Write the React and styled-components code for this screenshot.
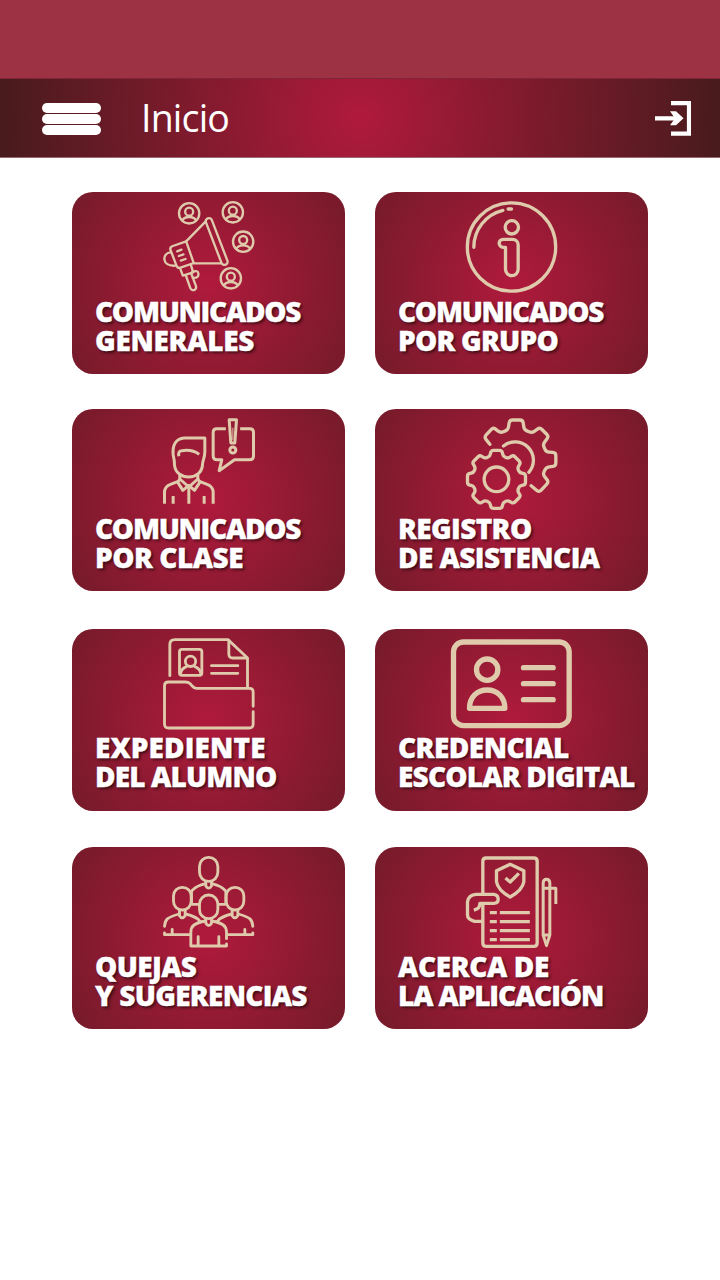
import React from 'react'
import styled, { createGlobalStyle } from 'styled-components'

const GlobalStyle = createGlobalStyle`
  * {
    box-sizing: border-box;
  }

  body {
    margin: 0;
    background: #fff;
    font-family: 'Open Sans', 'Noto Sans', sans-serif;
  }
`

const Screen = styled.div`
  width: 720px;
  min-height: 1280px;
  background: #fff;
`

const StatusBar = styled.div`
  height: 78px;
  background: #9c3243;
`

const Header = styled.header`
  display: flex;
  align-items: center;
  height: 80px;
  padding: 1px 29px 0 42px;
  border-top: 1px solid #822438;
  border-bottom: 1px solid #9a6a70;
  background: radial-gradient(circle 362px at 50% 50%, #b01a3c 0%, #471b1c 100%);
  background-origin: border-box;
`

const MenuButton = styled.button`
  display: flex;
  flex-direction: column;
  gap: 1px;
  width: 59px;
  padding: 0;
  border: 0;
  background: none;
  cursor: pointer;
`

const Bar = styled.span`
  height: 10px;
  border-radius: 5px;
  background: #fff;
`

const Title = styled.h1`
  flex: 1;
  margin: -2px 0 0 40px;
  font-size: 37.5px;
  font-weight: 400;
  line-height: 60px;
  letter-spacing: -0.8px;
  color: #fff;
`

const ExitButton = styled.button`
  display: flex;
  padding: 0;
  border: 0;
  background: none;
  cursor: pointer;
`

const Menu = styled.main`
  display: grid;
  grid-template-columns: 273px 273px;
  grid-template-rows: 217px 220px 218px 182px;
  column-gap: 30px;
  align-items: start;
  padding: 34px 72px 0;
`

const Card = styled.a`
  display: flex;
  flex-direction: column;
  gap: ${({ tight }) => (tight ? 0 : 1)}px;
  height: 182px;
  padding: 6px 0 0 23px;
  border-radius: 21px;
  background: radial-gradient(circle 290px at 50% 50%, #b01a3c 0%, #471b1c 100%);
  text-decoration: none;
  cursor: pointer;
`

const CardIcon = styled.svg`
  width: 124px;
  height: 98px;
  margin-left: 52px;
  fill: none;
  stroke: #dfcaac;
  stroke-width: ${({ weight }) => weight};
  stroke-linecap: ${({ cap }) => cap || 'round'};
  stroke-linejoin: round;
`

const Label = styled.span`
  font-size: 28px;
  font-weight: 800;
  line-height: 28.5px;
  color: #fff;
  white-space: nowrap;
  -webkit-text-stroke: 0.3px #fff;
  text-shadow: 2px 2px 3px rgba(0, 0, 0, 0.55);
`

const Line = styled.span`
  display: block;
  letter-spacing: ${({ spacing }) => spacing || 0}px;
`

// joins points with straight segments and softened corners
function rounded(points, radius, closed) {
  const n = points.length
  const towards = (a, b) => {
    const len = Math.hypot(b[0] - a[0], b[1] - a[1])
    const t = Math.min(radius / len, 0.5)
    return [a[0] + (b[0] - a[0]) * t, a[1] + (b[1] - a[1]) * t]
  }
  const corners = closed ? points : points.slice(1, -1)
  const offset = closed ? 0 : 1
  let d = closed ? '' : `M${points[0]}`
  corners.forEach((p, i) => {
    const prev = points[(i + offset - 1 + n) % n]
    const next = points[(i + offset + 1) % n]
    d += `${d ? 'L' : 'M'}${towards(p, prev)}Q${p} ${towards(p, next)}`
  })
  return closed ? `${d}Z` : `${d}L${points[n - 1]}`
}

const smallGear = []
for (let k = 0; k < 8; k++) {
  const a = (k * Math.PI) / 4
  ;[[-20, 69], [-16, 87], [16, 87], [20, 69]].forEach(([t, r]) => {
    smallGear.push([386 + t * Math.cos(a) + r * Math.sin(a), 233 + t * Math.sin(a) - r * Math.cos(a)])
  })
}

const bigGear = [
  [366, 128], [349, 106], [376, 77], [398, 94], [421, 84], [425, 55], [465, 55], [469, 84], [492, 94],
  [516, 77], [543, 104], [525, 128], [535, 151], [564, 153], [564, 193], [535, 197], [525, 218], [543, 241],
  [514, 272], [490, 252],
]

function Contact({ x, y }) {
  return (
    <g transform={`translate(${x} ${y})`}>
      <circle r="30.5" />
      <circle cy="-5" r="12" />
      <path d="M-21 21Q-15 11 0 11T21 21" />
    </g>
  )
}

function MegaphoneIcon() {
  return (
    <CardIcon viewBox="249.5 42 372 294" weight={7}>
      <Contact x={376} y={88} />
      <Contact x={507} y={85} />
      <Contact x={538} y={173} />
      <Contact x={501} y={283} />
      <rect x="449" y="98" width="19" height="149" rx="9.5" transform="rotate(-21 458.500 172.500)" />
      <path d="M425 113L367 172L390 238H471" />
      <path d="M367 172L327 186Q317 190 320 198L338 245Q341 254 350 251L390 237" />
      <path d="M319 205C295 207 292 248 334 245" />
      <path d="M349 253L357 275L388 265L381 242" />
      <path d="M366 274L379 311Q384 322 393 317Q399 313 396 305L382 268" />
      <path d="M385 264Q404 256 404 271Q403 284 387 281" />
      <path d="M340 202L353 197M345 216L359 211M351 230L365 225" />
    </CardIcon>
  )
}

function InfoIcon() {
  return (
    <CardIcon viewBox="246.5 42 372 294" weight={10}>
      <circle cx="431" cy="189" r="132.500" />
      <path d="M318 190A114 114 0 0 1 405 79M421 75H431" />
      <circle cx="432" cy="130" r="20" />
      <path d="M413 190H406A12 12 0 0 1 406 166H434A17 17 0 0 1 451 183V256A19 19 0 0 1 413 256Z" />
    </CardIcon>
  )
}

function TeacherIcon() {
  return (
    <CardIcon viewBox="249.5 40 372 294" weight={9} cap="butt">
      <path d="M423 109H361C336 111 325 130 328 160C330 169 332 175 332 190C334 214 354 226 375 226C396 226 414 213 416 190C416 175 423 170 423 150Z" />
      <path d="M345 164Q342 147 354 147Q385 142 406 158" />
      <path d="M348 220V232L375 256L402 232V220" />
      <path d="M348 232L342 242L357 266L375 251L392 266L408 242L402 232" />
      <path d="M302 306V270Q304 253 320 248L343 239M448 306V270Q446 253 430 248L407 239" />
      <path d="M375 254V306M328 283V306M421 283V306" />
      <path d="M486 81H459Q448 81 448 92V162Q448 174 460 174H474L466 207L512 174H557Q569 174 569 162V92Q569 81 558 81H529" />
      <path d="M496 54H518L513 124H501Z" />
      <path d="M507 78V116" stroke="#cf9a8e" strokeWidth="4" />
      <circle cx="507" cy="145" r="9" />
    </CardIcon>
  )
}

function GearsIcon() {
  return (
    <CardIcon viewBox="246.5 40 372 294" weight={10}>
      <path d={rounded(bigGear, 9)} />
      <path d={rounded(smallGear, 7, true)} />
      <circle cx="386" cy="233" r="37" />
      <path d="M407 133A55 55 0 0 1 483 212" />
    </CardIcon>
  )
}

function FolderIcon() {
  return (
    <CardIcon viewBox="249.5 39 372 294" weight={8.5}>
      <path d="M318 161V68Q318 53 333 53H493L551 108V195" />
      <path d="M495 55V96Q495 108 507 108H549" />
      <rect x="347" y="82" width="67" height="78" rx="7" />
      <circle cx="380" cy="118" r="15.500" />
      <path d="M350 155Q353 139 368 134M411 155Q408 139 393 134" />
      <path d="M443 131H522M443 154H522" />
      <path d="M568 253V210Q568 199 557 199H398Q390 199 384 191L379 185Q374 180 364 180H314Q302 180 302 192V306Q302 318 314 318H556Q568 318 568 306V269" />
    </CardIcon>
  )
}

function CredentialIcon() {
  return (
    <CardIcon viewBox="246.5 39 372 294" weight={16}>
      <rect x="257" y="60" width="347" height="251" rx="30" />
      <circle cx="358" cy="143" r="32" />
      <path d="M305 259C305 225 328 204 358 204S411 225 411 259Z" />
      <path d="M467 137H556M467 185H556M467 233H556" />
    </CardIcon>
  )
}

function PeopleIcon() {
  return (
    <CardIcon viewBox="249.5 39 372 294" weight={8.5}>
      <rect x="407" y="52" width="55" height="72" rx="27" />
      <path d="M426 124V138Q434 151 443 138V124" />
      <path d="M425 131Q398 137 384 152M444 131Q471 137 485 152M385 193H404M465 193H484M383 155V188M486 155V188" />
      <rect x="329" y="142" width="53" height="68" rx="26" />
      <rect x="487" y="142" width="53" height="68" rx="26" />
      <path d="M347 212V227Q355 240 364 227V212M505 212V227Q513 240 522 227V212" />
      <path d="M346 222C312 231 303 238 302 259M365 222Q398 230 408 243" />
      <path d="M523 222C557 231 566 238 567 259M504 222Q471 230 461 243" />
      <path d="M302 279V284H378M325 268V282M567 279V284H492M543 268V282" />
      <rect x="407" y="165" width="55" height="71" rx="27" />
      <path d="M426 237V250Q434 263 443 250V237" />
      <path d="M425 243C392 249 381 258 381 276V318H488V312M444 243C477 249 488 258 488 276V296" />
      <path d="M403 290V316M465 290V316" />
    </CardIcon>
  )
}

function DocumentIcon() {
  return (
    <CardIcon viewBox="246.5 39 372 294" weight={10} cap="butt">
      <path d="M345 162V64Q345 54 355 54H498Q508 54 508 64V309Q508 319 498 319H355Q345 319 345 309V190" />
      <path d="M427 73L386 92V125Q390 150 427 171Q464 150 468 125V92Z" />
      <path d="M413 114L427 126L453 100" />
      <path d="M345 244H320Q299 238 299 225V185Q302 165 325 163H378Q391 165 391 178Q391 190 378 190H336Q337 206 318 210" />
      <path d="M366 218H387M366 245H387M366 272H387M366 299H387M396 218H486M396 245H486M396 272H486M396 299H486" />
      <path d="M526 285V130Q526 118 536 118Q546 118 546 130V285L536 317ZM526 285H546M526 145H564V192" strokeWidth="9" />
    </CardIcon>
  )
}

const items = [
  { icon: MegaphoneIcon, lines: [['COMUNICADOS', -1.3], ['GENERALES', -0.3]] },
  { icon: InfoIcon, lines: [['COMUNICADOS', -1.3], ['POR GRUPO', -0.8]] },
  { icon: TeacherIcon, lines: [['COMUNICADOS', -1.3], ['POR CLASE', -0.5]] },
  { icon: GearsIcon, lines: [['REGISTRO', -0.65], ['DE ASISTENCIA', -0.58]] },
  { icon: FolderIcon, tight: true, lines: [['EXPEDIENTE', 0.1], ['DEL ALUMNO', -0.85]] },
  { icon: CredentialIcon, tight: true, lines: [['CREDENCIAL', -0.55], ['ESCOLAR DIGITAL', -0.82]] },
  { icon: PeopleIcon, lines: [['QUEJAS', -0.65], ['Y SUGERENCIAS', -0.75]] },
  { icon: DocumentIcon, lines: [['ACERCA DE', -0.4], ['LA APLICACIÓN', -1.15]] },
]

export default function App() {
  return (
    <Screen>
      <GlobalStyle />
      <StatusBar />
      <Header>
        <MenuButton aria-label="Menú">
          <Bar />
          <Bar />
          <Bar />
        </MenuButton>
        <Title>Inicio</Title>
        <ExitButton aria-label="Salir">
          <svg width="36" height="36" viewBox="0 0.5 36 36" fill="none" stroke="#fff" strokeWidth="4.2">
            <path d="M16 2.600H34V33.200H16M0 17.800H24" />
            <path d="M15 10.800H21L28.500 17.800L21 24.800H15L20 17.800Z" fill="#fff" stroke="none" />
          </svg>
        </ExitButton>
      </Header>
      <Menu>
        {items.map(({ icon: Icon, lines, tight }, i) => (
          <Card key={i} tight={tight ? 1 : 0}>
            <Icon />
            <Label>
              {lines.map(([text, spacing]) => (
                <Line key={text} spacing={spacing}>
                  {text}
                </Line>
              ))}
            </Label>
          </Card>
        ))}
      </Menu>
    </Screen>
  )
}
